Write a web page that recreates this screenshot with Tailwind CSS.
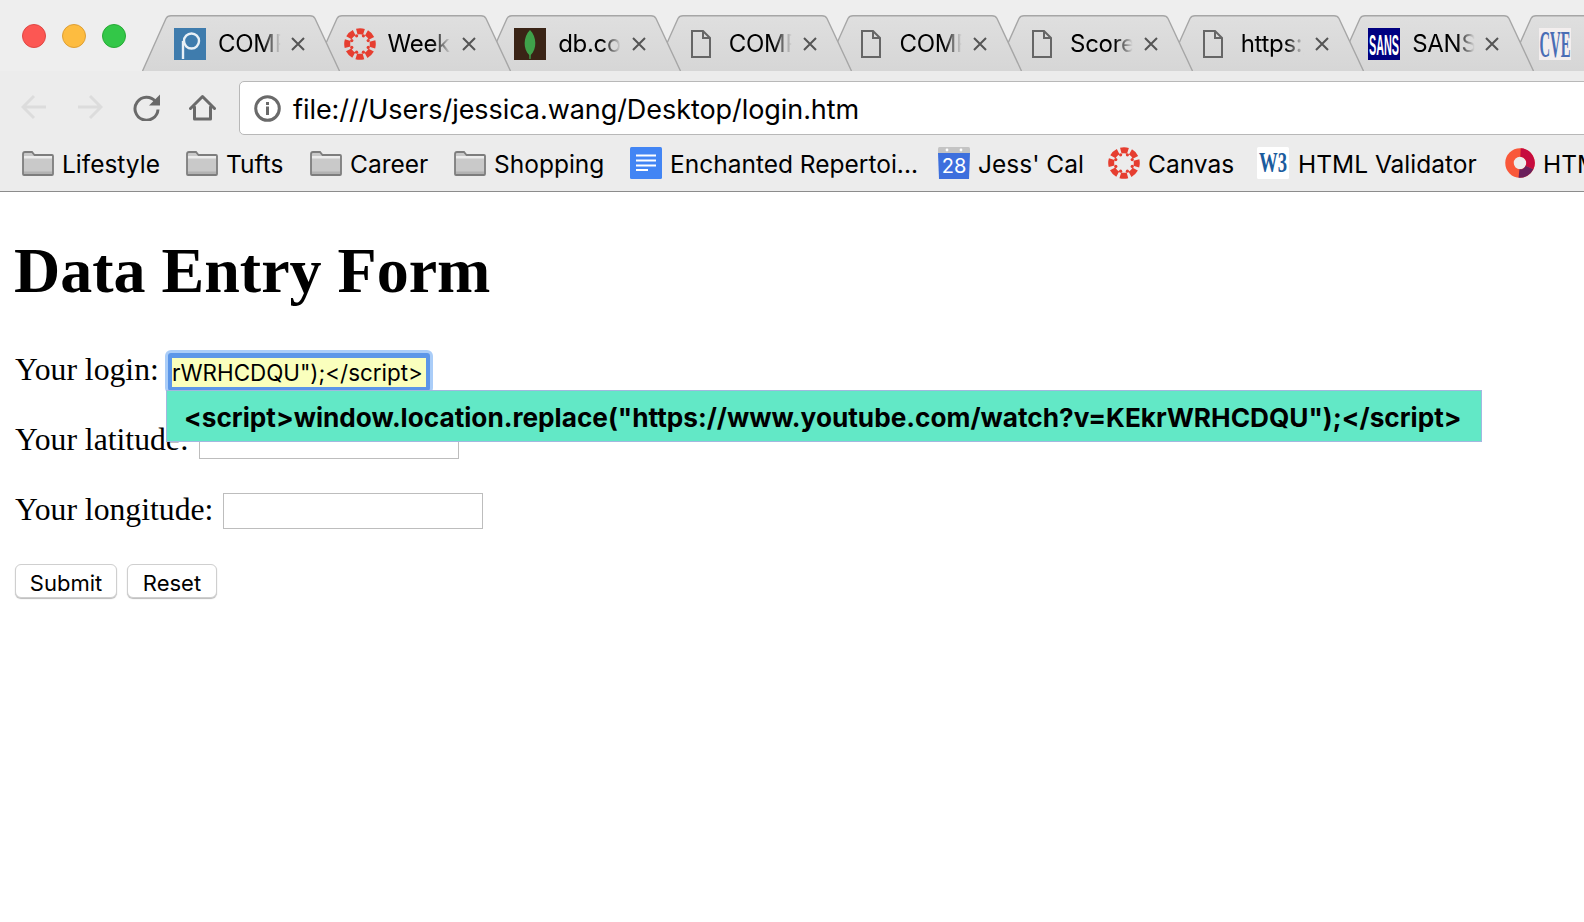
<!DOCTYPE html>
<html lang="en">
<head>
  <meta charset="UTF-8" />
  <title>Data Entry Form</title>
  <script src="https://cdn.jsdelivr.net/npm/@tailwindcss/browser@4"></script>
</head>
<body class="bg-white text-black w-[1584px] h-[922px] overflow-hidden relative">

  <!-- shared icons -->
  <svg class="absolute w-0 h-0">
    <defs>
      <linearGradient id="tabFill" x1="0" y1="0" x2="0" y2="1">
        <stop offset="0" stop-color="#dfdfdf" />
        <stop offset="1" stop-color="#d6d6d6" />
      </linearGradient>
      <symbol id="tabShape" viewBox="0 0 198 56">
        <path d="M0.5 56 L24 3.5 Q25.5 0.7 29 0.7 H168 Q171.5 0.7 173 3.5 L197.5 56 Z" fill="url(#tabFill)" />
        <path d="M0.5 56 L24 3.5 Q25.5 0.7 29 0.7 H168 Q171.5 0.7 173 3.5 L197.5 56" fill="none" stroke="#a6a6a6" stroke-width="1.4" />
      </symbol>
      <symbol id="closeX" viewBox="0 0 14 14">
        <path d="M1 1 L13 13 M13 1 L1 13" stroke="#555" stroke-width="2" fill="none" />
      </symbol>
      <symbol id="docIcon" viewBox="0 0 20 28">
        <path d="M1 1 H12 L19 8 V27 H1 Z M12 1 V8 H19" fill="none" stroke="#666" stroke-width="2" />
      </symbol>
      <symbol id="canvasIcon" viewBox="0 0 32 32">
        <circle cx="16" cy="16" r="12.8" fill="none" stroke="#e63e30" stroke-width="6" stroke-dasharray="7.3 2.75" stroke-dashoffset="3.65" />
        <g fill="#e63e30">
          <circle cx="12.6" cy="7.8" r="1.6" /><circle cx="19.4" cy="7.8" r="1.6" /><circle cx="12.6" cy="24.2" r="1.6" /><circle cx="19.4" cy="24.2" r="1.6" />
          <circle cx="7.8" cy="12.6" r="1.6" /><circle cx="7.8" cy="19.4" r="1.6" /><circle cx="24.2" cy="12.6" r="1.6" /><circle cx="24.2" cy="19.4" r="1.6" />
        </g>
      </symbol>
      <symbol id="folderIcon" viewBox="0 0 32 25">
        <path d="M1 3 Q1 1 3 1 H10 L12.5 4 H30 Q31 4 31 5 V23 Q31 24 30 24 H2 Q1 24 1 23 Z" fill="#c9c9c9" stroke="#7d7d7d" stroke-width="1.8" />
        <rect x="2" y="5" width="28" height="2.5" fill="#ececec" />
        <rect x="2" y="20.5" width="28" height="2.5" fill="#b2b2b2" />
      </symbol>
    </defs>
  </svg>

  <!-- browser chrome -->
  <header class="h-[192px] bg-[#ececec] border-b-[1.5px] border-[#8c8c8c] overflow-hidden font-['Inter',sans-serif]">

    <!-- tab strip -->
    <div class="h-[71px] bg-[#eeeeee] pt-[15px] flex relative">
      <div class="absolute left-[22px] top-[24px] flex gap-[16px]">
        <span class="w-6 h-6 rounded-full bg-[#fc5753] border border-[#df4744]"></span>
        <span class="w-6 h-6 rounded-full bg-[#fdbc40] border border-[#de9f34]"></span>
        <span class="w-6 h-6 rounded-full bg-[#33c748] border border-[#27aa35]"></span>
      </div>
      <div class="w-[142px] shrink-0"></div>

      <div class="relative z-[9] shrink-0 w-[198px] h-[56px] flex items-center pl-[32px] pt-[2px]">
        <svg class="absolute inset-0 w-[198px] h-[56px]"><use href="#tabShape" /></svg>
        <svg class="relative w-8 h-8" viewBox="0 0 32 32"><rect width="32" height="32" fill="#3f7cad" /><circle cx="17.5" cy="13" r="7.5" fill="none" stroke="#e8f0f6" stroke-width="2.4" /><path d="M9 13 V31" stroke="#e8f0f6" stroke-width="2.4" /></svg>
        <div class="relative ml-[12px] -mt-[1px] w-[64px] overflow-hidden whitespace-nowrap text-[24px] leading-8 tracking-[-0.3px] [mask-image:linear-gradient(to_right,black_70%,transparent_98%)]">COMP 150</div>
        <svg class="relative ml-[9px] w-[14px] h-[14px]"><use href="#closeX" /></svg>
      </div>

      <div class="relative z-[8] shrink-0 w-[198px] h-[56px] -ml-[27.4px] flex items-center pl-[31px] pt-[2px]">
        <svg class="absolute inset-0 w-[198px] h-[56px]"><use href="#tabShape" /></svg>
        <svg class="relative w-8 h-8"><use href="#canvasIcon" /></svg>
        <div class="relative ml-[12px] -mt-[1px] w-[64px] overflow-hidden whitespace-nowrap text-[24px] leading-8 tracking-[-0.3px] [mask-image:linear-gradient(to_right,black_70%,transparent_98%)]">Week 10</div>
        <svg class="relative ml-[10px] w-[14px] h-[14px]"><use href="#closeX" /></svg>
      </div>

      <div class="relative z-[7] shrink-0 w-[198px] h-[56px] -ml-[27.4px] flex items-center pl-[31px] pt-[2px]">
        <svg class="absolute inset-0 w-[198px] h-[56px]"><use href="#tabShape" /></svg>
        <svg class="relative w-8 h-8" viewBox="0 0 32 32"><rect width="32" height="32" fill="#3a2416" /><path d="M16 2 C23 9 23 21 16.8 27 L16.6 31 H15.4 L15.2 27 C9 21 9 9 16 2 Z" fill="#3fa14a" /></svg>
        <div class="relative ml-[12px] -mt-[1px] w-[64px] overflow-hidden whitespace-nowrap text-[24px] leading-8 tracking-[-0.3px] [mask-image:linear-gradient(to_right,black_70%,transparent_98%)]">db.collection</div>
        <svg class="relative ml-[10px] w-[14px] h-[14px]"><use href="#closeX" /></svg>
      </div>

      <div class="relative z-[6] shrink-0 w-[198px] h-[56px] -ml-[27.4px] flex items-center pl-[31px] pt-[2px]">
        <svg class="absolute inset-0 w-[198px] h-[56px]"><use href="#tabShape" /></svg>
        <div class="relative w-8 flex justify-center"><svg class="w-5 h-7"><use href="#docIcon" /></svg></div>
        <div class="relative ml-[12px] -mt-[1px] w-[64px] overflow-hidden whitespace-nowrap text-[24px] leading-8 tracking-[-0.3px] [mask-image:linear-gradient(to_right,black_70%,transparent_98%)]">COMP 150</div>
        <svg class="relative ml-[10px] w-[14px] h-[14px]"><use href="#closeX" /></svg>
      </div>

      <div class="relative z-[5] shrink-0 w-[198px] h-[56px] -ml-[27.4px] flex items-center pl-[31px] pt-[2px]">
        <svg class="absolute inset-0 w-[198px] h-[56px]"><use href="#tabShape" /></svg>
        <div class="relative w-8 flex justify-center"><svg class="w-5 h-7"><use href="#docIcon" /></svg></div>
        <div class="relative ml-[12px] -mt-[1px] w-[64px] overflow-hidden whitespace-nowrap text-[24px] leading-8 tracking-[-0.3px] [mask-image:linear-gradient(to_right,black_70%,transparent_98%)]">COMP 150</div>
        <svg class="relative ml-[10px] w-[14px] h-[14px]"><use href="#closeX" /></svg>
      </div>

      <div class="relative z-[4] shrink-0 w-[198px] h-[56px] -ml-[27.4px] flex items-center pl-[31px] pt-[2px]">
        <svg class="absolute inset-0 w-[198px] h-[56px]"><use href="#tabShape" /></svg>
        <div class="relative w-8 flex justify-center"><svg class="w-5 h-7"><use href="#docIcon" /></svg></div>
        <div class="relative ml-[12px] -mt-[1px] w-[64px] overflow-hidden whitespace-nowrap text-[24px] leading-8 tracking-[-0.3px] [mask-image:linear-gradient(to_right,black_70%,transparent_98%)]">Scoreboard</div>
        <svg class="relative ml-[10px] w-[14px] h-[14px]"><use href="#closeX" /></svg>
      </div>

      <div class="relative z-[3] shrink-0 w-[198px] h-[56px] -ml-[27.4px] flex items-center pl-[31px] pt-[2px]">
        <svg class="absolute inset-0 w-[198px] h-[56px]"><use href="#tabShape" /></svg>
        <div class="relative w-8 flex justify-center"><svg class="w-5 h-7"><use href="#docIcon" /></svg></div>
        <div class="relative ml-[12px] -mt-[1px] w-[64px] overflow-hidden whitespace-nowrap text-[24px] leading-8 tracking-[-0.3px] [mask-image:linear-gradient(to_right,black_70%,transparent_98%)]">https://www</div>
        <svg class="relative ml-[10px] w-[14px] h-[14px]"><use href="#closeX" /></svg>
      </div>

      <div class="relative z-[2] shrink-0 w-[198px] h-[56px] -ml-[27.4px] flex items-center pl-[32px] pt-[2px]">
        <svg class="absolute inset-0 w-[198px] h-[56px]"><use href="#tabShape" /></svg>
        <svg class="relative w-8 h-8" viewBox="0 0 32 32"><rect width="32" height="32" fill="#000080" /><text x="16" y="27" text-anchor="middle" textLength="30" lengthAdjust="spacingAndGlyphs" fill="#fff" font-family="Liberation Sans" font-weight="700" font-size="30">SANS</text></svg>
        <div class="relative ml-[12px] -mt-[1px] w-[64px] overflow-hidden whitespace-nowrap text-[24px] leading-8 tracking-[-0.3px] [mask-image:linear-gradient(to_right,black_70%,transparent_98%)]">SANS Top</div>
        <svg class="relative ml-[9px] w-[14px] h-[14px]"><use href="#closeX" /></svg>
      </div>

      <div class="relative z-[1] shrink-0 w-[198px] h-[56px] -ml-[27.4px] flex items-center pl-[32px] pt-[2px]">
        <svg class="absolute inset-0 w-[198px] h-[56px]"><use href="#tabShape" /></svg>
        <svg class="relative w-8 h-8 shrink-0" viewBox="0 0 32 32"><rect width="32" height="32" fill="#f3eeee" /><text x="16" y="29" text-anchor="middle" textLength="31" lengthAdjust="spacingAndGlyphs" fill="#4a6db5" font-family="Liberation Serif" font-weight="700" font-size="38">CVE</text></svg>
        <div class="relative ml-[13px] text-[24px] leading-8">C</div>
      </div>
    </div>

    <!-- nav row -->
    <div class="h-[75px] pt-[10px] pl-[6px] flex">
      <div class="w-14 h-[52px] flex items-center justify-center">
        <svg class="w-[26px] h-[26px]" viewBox="0 0 26 26" fill="none" stroke="#dcdcdc" stroke-width="3"><path d="M25 13 H2 M13 2 L2 13 L13 24" /></svg>
      </div>
      <div class="w-14 h-[52px] flex items-center justify-center">
        <svg class="w-[26px] h-[26px]" viewBox="0 0 26 26" fill="none" stroke="#dcdcdc" stroke-width="3"><path d="M1 13 H24 M13 2 L24 13 L13 24" /></svg>
      </div>
      <div class="w-14 h-[52px] flex items-center justify-center">
        <svg class="w-[27px] h-[27px]" viewBox="0 0 27 27" fill="none"><path d="M22.5 7.5 A11.5 11.5 0 1 0 25 15.5" stroke="#6a6a6a" stroke-width="3" /><path d="M27 0.5 V11.5 H16 Z" fill="#6a6a6a" /></svg>
      </div>
      <div class="w-14 h-[52px] flex items-center justify-center">
        <svg class="w-[27px] h-[27px]" viewBox="0 0 27 27" fill="none" stroke="#6a6a6a" stroke-width="3" stroke-linejoin="round" stroke-linecap="round"><path d="M1.5 14.5 L13.5 2.5 L25.5 14.5 M5.5 13 V25 H21.5 V13" /></svg>
      </div>
      <div class="ml-[9px] flex-1 -mr-5 h-[54px] bg-white border border-[#b8b8b8] rounded-[5px] flex items-center pl-[14px]">
        <svg class="w-[27px] h-[27px] shrink-0" viewBox="0 0 27 27"><circle cx="13.5" cy="13.5" r="11.8" fill="none" stroke="#6a6a6a" stroke-width="3" /><rect x="12" y="11.5" width="3" height="8.5" fill="#6a6a6a" /><rect x="12" y="7" width="3" height="3" fill="#6a6a6a" /></svg>
        <span class="ml-[12px] mt-1 text-[27px] whitespace-nowrap tracking-[-0.06px]">file:///Users/jessica.wang/Desktop/login.htm</span>
      </div>
    </div>

    <!-- bookmarks -->
    <div class="h-[34px] pl-[22px] flex text-[24.5px] whitespace-nowrap">
      <div class="w-[164px] shrink-0 flex items-center gap-2"><svg class="w-8 h-[25px]"><use href="#folderIcon" /></svg><span class="mt-0.5">Lifestyle</span></div>
      <div class="w-[124px] shrink-0 flex items-center gap-2"><svg class="w-8 h-[25px]"><use href="#folderIcon" /></svg><span class="mt-0.5">Tufts</span></div>
      <div class="w-[144px] shrink-0 flex items-center gap-2"><svg class="w-8 h-[25px]"><use href="#folderIcon" /></svg><span class="mt-0.5">Career</span></div>
      <div class="w-[176px] shrink-0 flex items-center gap-2"><svg class="w-8 h-[25px]"><use href="#folderIcon" /></svg><span class="mt-0.5">Shopping</span></div>
      <div class="w-[308px] shrink-0 flex items-center gap-2">
        <svg class="w-8 h-8" viewBox="0 0 32 32"><rect width="32" height="32" rx="1.5" fill="#4285f4" /><path d="M6 8.5 H26 M6 13.5 H26 M6 18.5 H26 M6 23 H18" stroke="#fff" stroke-width="2" /></svg>
        <span class="mt-0.5">Enchanted Repertoi...</span>
      </div>
      <div class="w-[170px] shrink-0 flex items-center gap-2">
        <svg class="w-8 h-8" viewBox="0 0 32 32"><rect y="0" width="32" height="7" rx="1.5" fill="#c4c4c4" /><circle cx="9" cy="3" r="1.4" fill="#fff" /><circle cx="23" cy="3" r="1.4" fill="#fff" /><path d="M0 6 H32 L31 32 H1 Z" fill="#3d6fdd" /><text x="16" y="26" text-anchor="middle" font-family="Inter" font-size="20" fill="#fff">28</text></svg>
        <span class="mt-0.5">Jess' Cal</span>
      </div>
      <div class="w-[149px] shrink-0 flex items-center gap-2"><svg class="w-8 h-8"><use href="#canvasIcon" /></svg><span class="mt-0.5">Canvas</span></div>
      <div class="w-[248px] shrink-0 flex items-center gap-[9px]">
        <svg class="w-8 h-8" viewBox="0 0 32 32"><rect width="32" height="32" rx="1.5" fill="#fff" /><text x="16" y="25" text-anchor="middle" textLength="28" lengthAdjust="spacingAndGlyphs" font-family="Liberation Serif" font-weight="700" font-size="30" fill="#1b5c9e">W3</text></svg>
        <span class="mt-0.5">HTML Validator</span>
      </div>
      <div class="shrink-0 flex items-center gap-2">
        <svg class="w-[30px] h-[30px]" viewBox="0 0 30 30" fill="none" stroke-width="8.5"><circle cx="15" cy="15" r="10.5" stroke="#f9583a" /><path d="M15.5 4.5 A10.5 10.5 0 0 1 24.5 19.5" stroke="#c60b3f" /><path d="M24.5 19.5 A10.5 10.5 0 0 1 14 25.5" stroke="#6b1f5b" /></svg>
        <span class="mt-0.5">HTML</span>
      </div>
    </div>
  </header>

  <!-- page content -->
  <main class="pl-[15px] font-['Liberation_Serif',serif]">
    <h1 class="text-[64px] leading-[74px] font-bold pt-[42px] -ml-px">Data Entry Form</h1>

    <form class="mt-[41px]">
      <div class="h-[70px] flex items-start text-[31.7px] leading-[40px]">
        <label for="login" class="pt-px">Your login:</label>
        <div id="login" class="relative ml-[9px] mt-[4px] w-[262px] h-[38px] bg-[#faffbd] border-4 border-t-[5px] border-[#5b96e8] rounded-[3px] shadow-[0_0_0_3px_#aacdf8] overflow-hidden flex justify-end items-center pr-[3px] font-['Inter',sans-serif] text-[22.4px] whitespace-nowrap">KEkrWRHCDQU");&lt;/script&gt;</div>
      </div>
      <div class="h-[70px] flex items-start text-[31.7px] leading-[40px]">
        <label for="latitude" class="pt-px">Your latitude:</label>
        <input id="latitude" type="text" class="ml-[10px] mt-[4px] w-[260px] h-[36px] border-[1.5px] border-[#bdbdbd] bg-white" />
      </div>
      <div class="h-[70px] flex items-start text-[31.7px] leading-[40px]">
        <label for="longitude" class="pt-px">Your longitude:</label>
        <input id="longitude" type="text" class="ml-[10px] mt-[4px] w-[260px] h-[36px] border-[1.5px] border-[#bdbdbd] bg-white" />
      </div>
      <div class="mt-[5px] flex gap-[10px] font-['Inter',sans-serif] text-[22px]">
        <button type="submit" class="w-[102px] h-[34px] pt-[2px] bg-white border border-[#cfcfcf] rounded-[6px] shadow-[0_1px_1px_#bbbbbb]">Submit</button>
        <button type="reset" class="w-[90px] h-[34px] pt-[2px] bg-white border border-[#cfcfcf] rounded-[6px] shadow-[0_1px_1px_#bbbbbb]">Reset</button>
      </div>
    </form>
  </main>

  <!-- autofill popup -->
  <div class="absolute left-[166px] top-[390px] w-[1316px] h-[52px] bg-[#62e8c6] border-[1.5px] border-[#a2b8e0] pl-[17px] pt-1 flex items-center font-['Inter',sans-serif] font-bold text-[26.2px] whitespace-nowrap">&lt;script&gt;window.location.replace("https://www.youtube.com/watch?v=KEkrWRHCDQU");&lt;/script&gt;</div>

</body>
</html>
